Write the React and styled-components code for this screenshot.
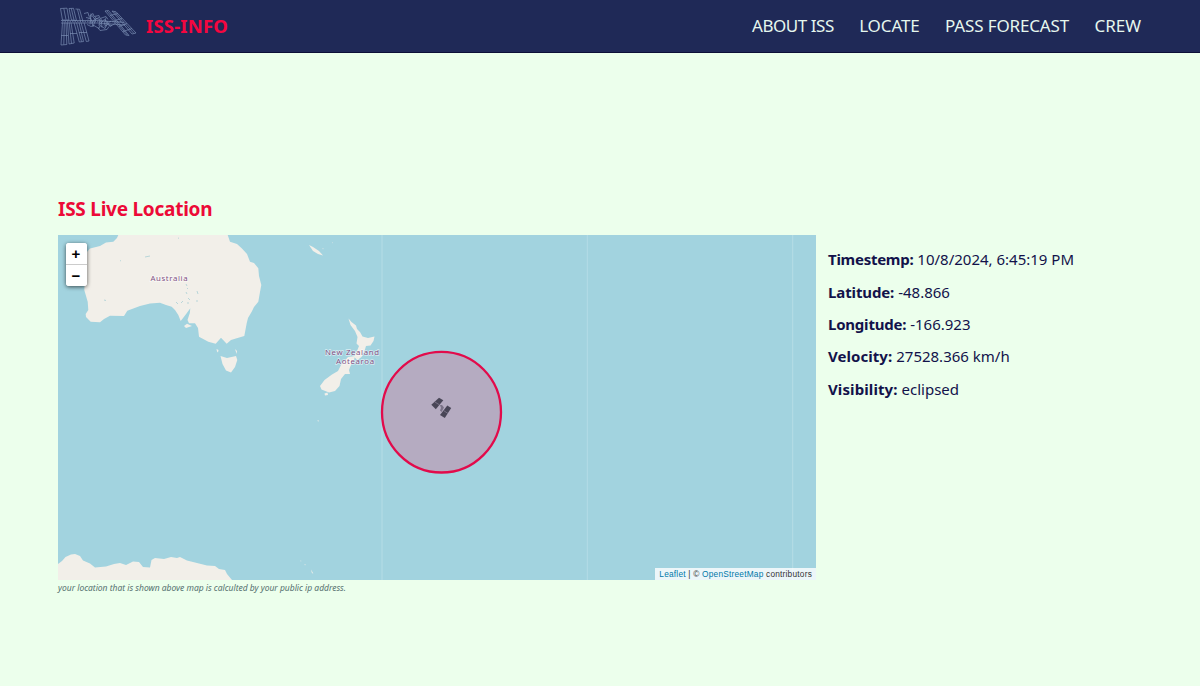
import React from "react";
import styled, { createGlobalStyle } from "styled-components";

const GlobalStyle = createGlobalStyle`
  * { box-sizing: border-box; }
  body {
    margin: 0;
    background: #ecffec;
    color: #12124a;
    font-family: "Noto Sans", "Open Sans", sans-serif;
  }
`;

const Page = styled.div`
  min-height: 686px;
  display: flex;
  flex-direction: column;
`;

const Header = styled.header`
  height: 53px;
  padding: 0 59px 0 58px;
  display: flex;
  align-items: center;
  justify-content: space-between;
  background: #1f2957;
  border-bottom: 1px solid #0d1037;
`;

const Brand = styled.a`
  display: flex;
  align-items: center;
  gap: 9px;
  color: #f5063f;
  font-size: 18.5px;
  font-weight: 700;
  letter-spacing: 0.2px;
  white-space: nowrap;
`;

const BrandName = styled.span`
  padding-bottom: 2px;
`;

const Logo = styled.svg`
  display: block;
  width: 79px;
  height: 42px;
`;

const Nav = styled.nav`
  display: flex;
  gap: 25.3px;
  padding-bottom: 1px;
`;

const NavLink = styled.a`
  color: #e6f7ee;
  font-size: 17px;
  line-height: 24px;
  letter-spacing: ${(p) => p.$tracking || "0"};
  white-space: nowrap;
`;

const Main = styled.main`
  padding: 142px 58px 0;
`;

const Title = styled.h2`
  margin: 0;
  height: 40px;
  line-height: 29px;
  color: #ec0a37;
  font-size: 19px;
  font-weight: 700;
  letter-spacing: -0.25px;
`;

const Content = styled.div`
  display: flex;
  gap: 12px;
`;

const MapFrame = styled.div`
  position: relative;
  width: 758px;
  height: 345px;
  overflow: hidden;
  background: #a2d3df;
`;

const MapDrawing = styled.svg`
  display: block;
  width: 100%;
  height: 100%;
`;

const ZoomControl = styled.div`
  position: absolute;
  left: 8px;
  top: 8px;
  width: 21px;
  border-radius: 3px;
  overflow: hidden;
  background: #fff;
  box-shadow: 0 1px 4px rgba(0, 0, 0, 0.65);
`;

const ZoomButton = styled.button`
  display: flex;
  align-items: center;
  justify-content: center;
  width: 21px;
  height: ${(p) => (p.$divided ? "22px" : "21px")};
  padding: 0 1px 0 0;
  border: 0;
  border-bottom: ${(p) => (p.$divided ? "1px solid #ccc" : "0")};
  background: #fff;
  color: #000;
  font: bold 15px "Liberation Sans", sans-serif;
`;

const Attribution = styled.div`
  position: absolute;
  right: 0;
  bottom: 0;
  height: 12px;
  padding: 0 4px;
  background: rgba(255, 255, 255, 0.8);
  color: #333;
  font: 8.3px/12px "Liberation Sans", sans-serif;
  letter-spacing: 0.22px;
  white-space: nowrap;
`;

const MapLink = styled.a`
  color: #0078a8;
`;

const Details = styled.dl`
  margin: 0;
  padding-top: 8px;
`;

const Detail = styled.div`
  display: flex;
  gap: 4px;
  height: 32.35px;
  align-items: center;
  font-size: 15px;
  white-space: nowrap;
`;

const Term = styled.dt`
  font-weight: 700;
  letter-spacing: ${(p) => p.$tracking || "0"};
`;

const Value = styled.dd`
  margin: 0;
`;

const Note = styled.p`
  margin: 0;
  color: #55706f;
  font-size: 8.5px;
  line-height: 16px;
  font-style: italic;
  letter-spacing: -0.01px;
`;

const links = [
  { label: "ABOUT ISS", tracking: "-0.45px" },
  { label: "LOCATE", tracking: "-0.1px" },
  { label: "PASS FORECAST", tracking: "-0.14px" },
  { label: "CREW", tracking: "0" },
];

const details = [
  { term: "Timestemp:", value: "10/8/2024, 6:45:19 PM", tracking: "-0.27px" },
  { term: "Latitude:", value: "-48.866", tracking: "-0.12px" },
  { term: "Longitude:", value: "-166.923", tracking: "-0.22px" },
  { term: "Velocity:", value: "27528.366 km/h", tracking: "0.05px" },
  { term: "Visibility:", value: "eclipsed", tracking: "0.1px" },
];

function StationLogo() {
  return (
    <Logo viewBox="58 5.5 79 42" fill="none" stroke="#7f93b8" strokeWidth="0.65" aria-hidden="true">
      <path d="M60.5 9L67 8.7L69 20.5H62.5ZM63.8 9L66 20M69 9L73.5 8.8L76.5 21L71.5 20.5ZM71.3 9L74 20.5M75.5 9.5L79.5 9.8L83 22M77.5 10L80.5 22" />
      <path d="M62.5 23L61 45.5L66.8 45L66 23M64.3 23L63.8 45M67.5 23L69 44.5L74.2 43.5L71 23M69.2 23L71.5 44M74 23L79.3 42.5L83.5 42L79 23M76.5 23L81.5 42M81 23L86.3 42L89 41.5L84 23M61.2 36H68M70 34H77M79 33H87" />
      <path d="M61 21H98L124 23M61 23.5H98L125 25.5" />
      <path d="M62 22.2H121" strokeDasharray="1.5 1" />
      <path d="M105 11.5L108.5 11L129 36L125.5 35.5ZM107 11.5L127.3 35.5M112 11.5L116 12.3L136 33.5L132 34.5ZM114 12L134 34M110 16L118 14M114.5 21L122 19M119 27L127 24M123 32L132 29" />
      <path d="M84 14l4-1 1 4 4-3 1 3 5-1 1 3 6-2 2 3M86 18l5 1 2 8 3-8 4 1-1 6 5-6 3 2-2 5 6-6M87 25l4 2 3-1 5 3 1-3 5 3 2-4 5 1M98 28l2 3 7-1 2-3M91 14l-1 11M96 17l-4 7M101 19l1 9M106 18l-2 8M88 20l4-4 3 4 4-2M107 22l3 5 5-3" />
    </Logo>
  );
}

function OceanMap() {
  return (
    <MapDrawing viewBox="58 235 758 345">
      <path d="M382 235V580M587.3 235V580M792.7 235V580" stroke="#b5dde6" strokeWidth="1" />
      <g fill="#f2efe9">
        <path d="M118.3 235L117 238L113.3 241.7L106 242.5L100 246L90 248.5L86 253L84.3 290L87.7 301.7L88.3 310L85.7 314L86 317L90.7 321.7L100 322.3L104 319L110 315.7L124 316L127.3 310.7L140 306L150 303.5L160 302.7L166 305L171.7 306.7L175 310L178.3 315L180.7 321L185 315.5L186.7 313.3L190.3 308.3L189.8 313L187.5 320L189 323.3L195 323.3L198 328L199 336.7L208.3 341.7L215.7 343.7L221 337.7L226.7 343.7L231 340L236.7 338.3L244.3 336L246.7 323.3L248 318L251.7 311.7L254 307L258.3 301.7L260 292L261.3 285L259 276L258.3 268.3L254 263L250 261.7L247 254L241.7 248.3L237 244L230 241.7L227.7 235Z" />
        <path d="M184 326L187 323.8L192 326L186 328Z" />
        <path d="M220.5 356L227 358L236 356L237.3 360L235 367L231 372.5L226 370.5L222.5 364Z" />
        <path d="M216.5 349l2 1-.5 2.5-1-1zM235 349l2 2-.3 3z" />
        <path d="M309 245L313 247L319 251L323 255.5L318 254L313 251Z" />
        <path d="M332.3 242l.7.4-.3 1zM322.5 248l1 .4-.5 1z" />
        <path d="M348.5 318.5L351.5 322L356 325.5L357 329L360 332L362.5 336.5L368 338L374.5 336.5L373.5 341L370.5 345.5L366 346L364.5 351L361.5 357L357.5 360L354 357L357 351L359 346L356.5 343.5L357.5 337L355 331L350.5 325Z" />
        <path d="M348 357L355 356L354 360L350.5 366L349 370L350 374L345 374L341 379L339.5 386L335 391L329 392.5L321.5 389.5L320 386L324.5 380L332 374.5L338 371L341 365Z" />
        <path d="M324.5 393.5l3-1 .5 2.5-3 .5zM317.5 420l1.5.7-1 1z" />
        <path d="M58 564L62 561L65.5 557L71 554.5L75 554L80 556L83 560.5L90 563.5L95 567.5L106 566.5L114 564L120 563L126 565L133 561.5L139 562L143 567L150 567.5L151.5 560L155 558L164 559L171 557L177 558L180 557L187 560.5L197 563L207 565.5L215 566L219 569L225 570L227 574L232 580H58Z" />
        <path d="M300.3 560.5l1 .3-.3 1zM304.5 564l1.2.5-.7 1zM311 569.5l1.5 2.5.8 2-1.5-1.2z" />
      </g>
      <path d="M145 257l5-1M104 300l2 .5M120 261l1-.5M178 238l1 .3M186 284l1 2M187 288l1 1M188 298l2 2M197 291l1 3M176 302l2 2M181 303l2-2M197 300v2M188 302v2M186 292l1 2" fill="none" stroke="#a9cfd4" strokeWidth="0.8" />
      <g fill="#7f4f83" stroke="#fff" strokeOpacity=".6" strokeWidth="1.4" paintOrder="stroke" fontFamily="Noto Sans, sans-serif" fontSize="7.8">
        <text x="150.5" y="280.5" textLength="37">Australia</text>
        <text x="325" y="355" textLength="54">New Zealand</text>
        <text x="336" y="364" textLength="38">Aotearoa</text>
      </g>
      <ellipse cx="441.5" cy="412.2" rx="59.5" ry="60.3" fill="#b5abc1" stroke="#e20b4b" strokeWidth="2.3" />
      <g fill="#494657">
        <path d="M431.3 404.8L439 397.8L443.3 400.3L435.8 409.3Z" />
        <path d="M440 415L447.3 405.5L451.2 408L444.8 418Z" />
        <path d="M440 405l2 0 2 2.5-2.5 4.5-1.5-1.5 1-2.5z" fill="#7b7388" />
      </g>
      <path d="M434.6 401.8l4.8 3M443.5 410.5l4.5 3" stroke="#8b8398" strokeWidth="0.7" />
    </MapDrawing>
  );
}

export default function App() {
  return (
    <>
      <GlobalStyle />
      <Page>
        <Header>
          <Brand>
            <StationLogo />
            <BrandName>ISS-INFO</BrandName>
          </Brand>
          <Nav>
            {links.map((l) => (
              <NavLink key={l.label} $tracking={l.tracking}>{l.label}</NavLink>
            ))}
          </Nav>
        </Header>
        <Main>
          <Title>ISS Live Location</Title>
          <Content>
            <MapFrame>
              <OceanMap />
              <ZoomControl>
                <ZoomButton $divided>+</ZoomButton>
                <ZoomButton>−</ZoomButton>
              </ZoomControl>
              <Attribution>
                <MapLink>Leaflet</MapLink> | © <MapLink>OpenStreetMap</MapLink> contributors
              </Attribution>
            </MapFrame>
            <Details>
              {details.map((d) => (
                <Detail key={d.term}>
                  <Term $tracking={d.tracking}>{d.term}</Term>
                  <Value>{d.value}</Value>
                </Detail>
              ))}
            </Details>
          </Content>
          <Note>your location that is shown above map is calculted by your public ip address.</Note>
        </Main>
      </Page>
    </>
  );
}
